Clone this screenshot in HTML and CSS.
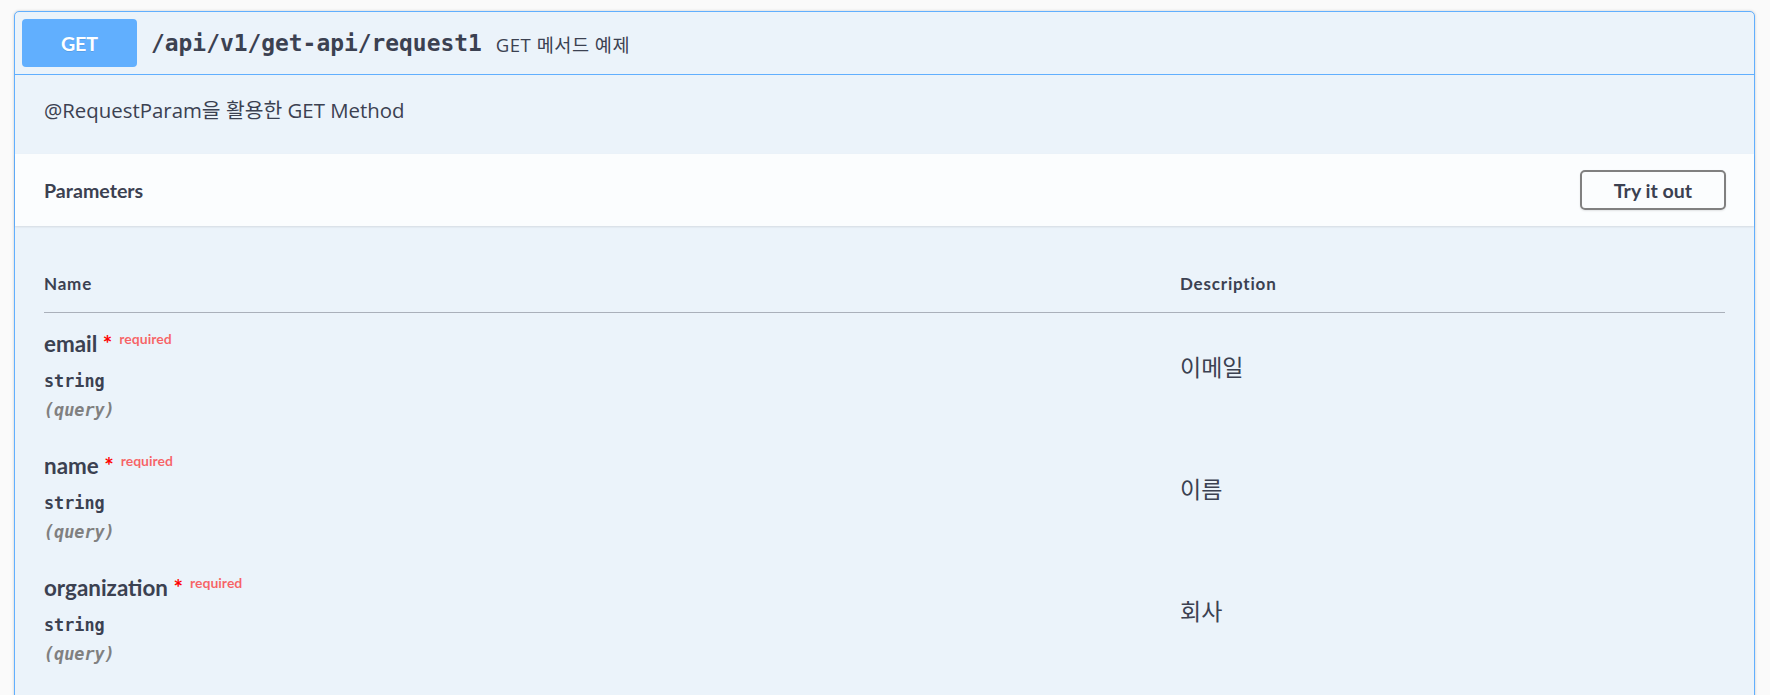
FILE: index.html
```html
<!DOCTYPE html>
<html lang="ko">
<head>
<meta charset="utf-8">
<title>GET /api/v1/get-api/request1</title>
<link rel="stylesheet" href="styles.css">
</head>
<body>
<div class="page">
  <div class="opblock">
    <div class="summary">
      <span class="method">GET</span>
      <span class="path">/api/v1/get-api/request1</span>
      <span class="summary-desc">GET 메서드 예제</span>
    </div>
    <div class="desc-wrap">
      <p>@RequestParam을 활용한 GET Method</p>
    </div>
    <div class="section-header">
      <h4 class="section-title">Parameters</h4>
      <button class="try-btn" type="button">Try it out</button>
    </div>
    <div class="table-container">
      <table class="params">
        <thead>
          <tr>
            <th class="col-name">Name</th>
            <th class="col-desc">Description</th>
          </tr>
        </thead>
        <tbody>
          <tr>
            <td class="cell-name">
              <div class="param-name">email<span class="star">&nbsp;*</span><span class="req">required</span></div>
              <div class="param-type">string</div>
              <div class="param-in">(query)</div>
            </td>
            <td class="cell-desc"><p>이메일</p></td>
          </tr>
          <tr>
            <td class="cell-name">
              <div class="param-name">name<span class="star">&nbsp;*</span><span class="req">required</span></div>
              <div class="param-type">string</div>
              <div class="param-in">(query)</div>
            </td>
            <td class="cell-desc"><p>이름</p></td>
          </tr>
          <tr>
            <td class="cell-name">
              <div class="param-name">organization<span class="star">&nbsp;*</span><span class="req">required</span></div>
              <div class="param-type">string</div>
              <div class="param-in">(query)</div>
            </td>
            <td class="cell-desc"><p>회사</p></td>
          </tr>
        </tbody>
      </table>
    </div>
  </div>
</div>
</body>
</html>
```

FILE: styles.css
```css
html, body {
  margin: 0;
  padding: 0;
  background: #fafafa;
  overflow: hidden;
}

.page {
  padding: 11px 15px 0 14px;
}

.opblock {
  border: 1px solid #61affe;
  border-radius: 5px;
  background: #ebf3fa;
  box-shadow: 0 0 3px rgba(0, 0, 0, 0.19);
  font-family: "Open Sans", "Noto Sans CJK KR", sans-serif;
  color: #3b4151;
}

.summary {
  display: flex;
  align-items: center;
  padding: 7px;
  border-bottom: 1px solid #61affe;
}

.method {
  width: 115px;
  height: 48px;
  display: flex;
  align-items: center;
  justify-content: center;
  flex-shrink: 0;
  background: #61affe;
  color: #fff;
  border-radius: 4px;
  font: 700 19.6px Lato, sans-serif;
  text-shadow: 0 1px 0 rgba(0, 0, 0, 0.1);
}

.path {
  padding: 0 14px;
  font: 700 22.9px "DejaVu Sans Mono", monospace;
  color: #3b4151;
}

.summary-desc {
  font-size: 18.6px;
  letter-spacing: 0.5px;
  color: #3b4151;
}

.desc-wrap {
  padding: 21px 28px 28.6px 29px;
}

.desc-wrap p {
  margin: 0;
  font-size: 20.4px;
  line-height: 29.4px;
}

.section-header {
  height: 72px;
  box-sizing: border-box;
  display: flex;
  align-items: center;
  justify-content: space-between;
  padding: 0 28px 0 29px;
  background: rgba(255, 255, 255, 0.8);
  box-shadow: 0 1px 2px rgba(0, 0, 0, 0.1);
}

.section-title {
  margin: 0;
  font: 700 19.6px Lato, sans-serif;
  color: #3b4151;
}

.try-btn {
  width: 146px;
  height: 40px;
  padding: 0;
  border: 2px solid #808080;
  border-radius: 5px;
  background: transparent;
  font: 700 19.6px Lato, sans-serif;
  color: #3b4151;
  box-shadow: 0 1px 2px rgba(0, 0, 0, 0.1);
}

.table-container {
  padding: 30px 29px 28px 29px;
}

.params {
  width: 100%;
  border-collapse: collapse;
  border-spacing: 0;
}

.params th {
  text-align: left;
  padding: 17.5px 0 18.5px;
  font: 700 17px/20px Lato, sans-serif;
  letter-spacing: 0.8px;
  color: #3b4151;
  border-bottom: 1px solid #aab0ba;
}

.col-name {
  width: 1136px;
}

.params td {
  vertical-align: top;
  padding: 0;
}

.cell-name {
  padding: 16px 0 13px 0 !important;
}

.param-name {
  font: 700 22.4px/30px Lato, sans-serif;
  color: #3b4151;
}

.star {
  color: #ff0000;
}

.req {
  position: relative;
  top: -8.4px;
  padding-left: 7px;
  font-size: 14px;
  line-height: 14px;
  color: rgba(255, 0, 0, 0.6);
}

.param-type {
  margin-top: 10px;
  font: 700 16.8px/24px "DejaVu Sans Mono", monospace;
  color: #3b4151;
}

.param-in {
  margin-top: 5px;
  font: italic 700 16.8px/24px "DejaVu Sans Mono", monospace;
  color: #808080;
}

.cell-desc {
  padding-top: 38px !important;
}

.cell-desc p {
  margin: 0;
  font-size: 23px;
  line-height: 33px;
  color: #3b4151;
}
```
